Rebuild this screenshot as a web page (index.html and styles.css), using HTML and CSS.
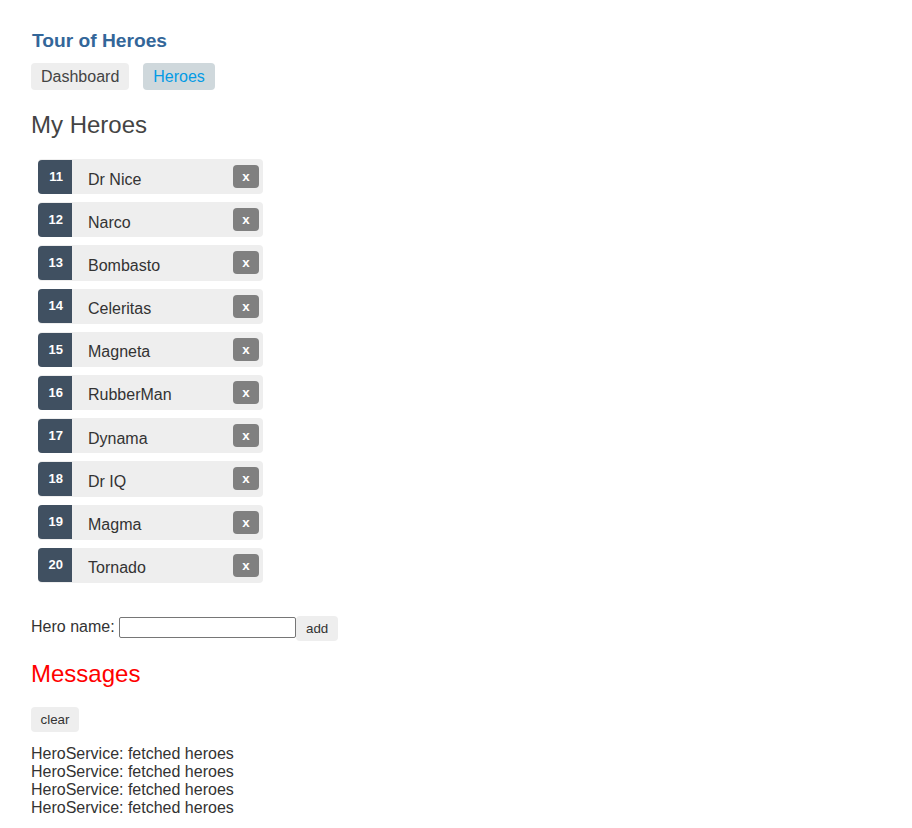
FILE: index.html
```html
<!DOCTYPE html>
<html lang="en">
<head>
<meta charset="utf-8">
<title>Tour of Heroes</title>
<link rel="stylesheet" href="styles.css">
</head>
<body>
<div class="page">
  <h1 class="title">Tour of Heroes</h1>
  <nav class="nav">
    <a class="nav-link" href="#">Dashboard</a>
    <a class="nav-link active" href="#">Heroes</a>
  </nav>
  <h2 class="section-title">My Heroes</h2>
  <ul class="heroes">
    <li class="hero"><span class="badge">11</span><span class="name">Dr Nice</span><button class="delete" type="button">x</button></li>
    <li class="hero"><span class="badge">12</span><span class="name">Narco</span><button class="delete" type="button">x</button></li>
    <li class="hero"><span class="badge">13</span><span class="name">Bombasto</span><button class="delete" type="button">x</button></li>
    <li class="hero"><span class="badge">14</span><span class="name">Celeritas</span><button class="delete" type="button">x</button></li>
    <li class="hero"><span class="badge">15</span><span class="name">Magneta</span><button class="delete" type="button">x</button></li>
    <li class="hero"><span class="badge">16</span><span class="name">RubberMan</span><button class="delete" type="button">x</button></li>
    <li class="hero"><span class="badge">17</span><span class="name">Dynama</span><button class="delete" type="button">x</button></li>
    <li class="hero"><span class="badge">18</span><span class="name">Dr IQ</span><button class="delete" type="button">x</button></li>
    <li class="hero"><span class="badge">19</span><span class="name">Magma</span><button class="delete" type="button">x</button></li>
    <li class="hero"><span class="badge">20</span><span class="name">Tornado</span><button class="delete" type="button">x</button></li>
  </ul>
  <div class="add-row">
    <label class="add-label" for="heroName">Hero name:</label>
    <input class="add-input" id="heroName" type="text">
    <button class="btn add-btn" type="button">add</button>
  </div>
  <h2 class="messages-title">Messages</h2>
  <button class="btn clear-btn" type="button">clear</button>
  <div class="messages">
    <div class="message">HeroService: fetched heroes</div>
    <div class="message">HeroService: fetched heroes</div>
    <div class="message">HeroService: fetched heroes</div>
    <div class="message">HeroService: fetched heroes</div>
  </div>
</div>
</body>
</html>
```
FILE: styles.css
```css
* { box-sizing: border-box; }

html, body {
  margin: 0;
  padding: 0;
  background: #ffffff;
}

body {
  font-family: "Liberation Sans", Arial, sans-serif;
  color: #333;
}

.page {
  padding: 30px 31px 0 31px;
  display: flex;
  flex-direction: column;
  align-items: flex-start;
}

.title {
  margin: 0 0 0 1px;
  font-size: 19.2px;
  line-height: 22px;
  font-weight: bold;
  color: #336699;
}

.nav {
  display: flex;
  gap: 14px;
  margin-top: 11px;
}

.nav-link {
  display: block;
  padding: 4.5px 10px;
  font-size: 16px;
  line-height: 18px;
  color: #444;
  background: #eee;
  border-radius: 4px;
  text-decoration: none;
}

.nav-link.active {
  color: #039be5;
  background: #cfd8dc;
}

.section-title {
  margin: 21px 0 0 0;
  font-size: 24px;
  line-height: 28px;
  font-weight: normal;
  color: #444;
}

.heroes {
  list-style: none;
  margin: 20px 0 0 7px;
  padding: 0;
  display: flex;
  flex-direction: column;
  gap: 8px;
}

.hero {
  display: flex;
  align-items: flex-start;
  width: 225px;
  height: 35.2px;
  background: #eee;
  border-radius: 4px;
}

.badge {
  display: block;
  width: 34px;
  height: 34px;
  margin-top: 0.8px;
  padding: 9px 9px 0 0;
  text-align: right;
  font-size: 13px;
  line-height: 15px;
  font-weight: bold;
  color: #fff;
  background: #405061;
  border-radius: 4px 0 0 4px;
}

.name {
  margin: 11.5px 0 0 16px;
  font-size: 16px;
  line-height: 18px;
  color: #333;
}

.delete {
  margin: 6px 4px 0 auto;
  width: 26px;
  height: 23px;
  padding: 0;
  border: none;
  border-radius: 4px;
  background: #808080;
  color: #fff;
  font-family: "Liberation Sans", Arial, sans-serif;
  font-size: 13.33px;
  line-height: 23px;
  font-weight: bold;
  text-align: center;
}

.add-row {
  display: flex;
  align-items: flex-start;
  margin-top: 33px;
}

.add-label {
  margin: 2.5px 4.5px 0 0;
  font-size: 16px;
  line-height: 18px;
  color: #333;
}

.add-input {
  margin-top: 1px;
  width: 177px;
  height: 21px;
  padding: 1px 2px;
  border: 1px solid #767676;
  border-radius: 2px;
  background: #fff;
  font-family: "Liberation Sans", Arial, sans-serif;
  font-size: 13.33px;
}

.btn {
  height: 25px;
  padding: 0;
  border: none;
  border-radius: 4px;
  background: #eee;
  color: #333;
  font-family: "Liberation Sans", Arial, sans-serif;
  font-size: 13.33px;
  line-height: 25px;
  text-align: center;
}

.add-btn {
  width: 42px;
}

.messages-title {
  margin: 19px 0 0 0;
  font-size: 24px;
  line-height: 28px;
  font-weight: normal;
  color: #ff0000;
}

.clear-btn {
  margin-top: 19px;
  width: 48px;
}

.messages {
  margin-top: 13px;
}

.message {
  font-size: 16px;
  line-height: 18px;
  color: #333;
}
```
